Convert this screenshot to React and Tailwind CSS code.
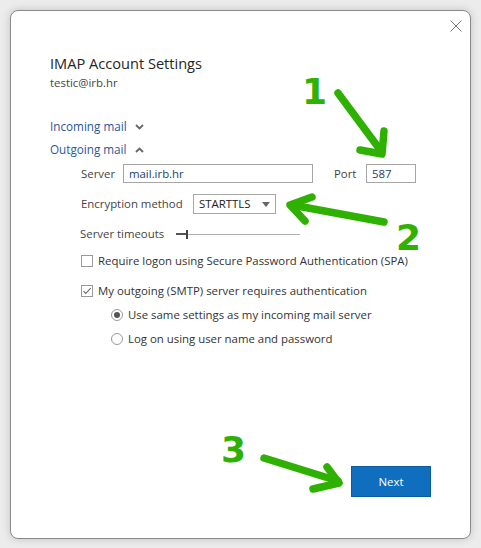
import { useState } from 'react';

const font = { fontFamily: '"Open Sans", "Noto Sans", sans-serif' };

function Chevron({ up }) {
  return (
    <svg className="w-[9px] h-[6px] ml-[8px] mt-[2px]" viewBox="0 0 9 6" fill="none" stroke="#666" strokeWidth="1.8">
      {up ? <path d="M1 5l3.5-3.5L8 5" /> : <path d="M1 1l3.5 3.5L8 1" />}
    </svg>
  );
}

function Checkbox({ checked, label }) {
  return (
    <label className="flex items-center gap-[5px] text-[11.4px] leading-[18px] text-[#333]">
      <span className="w-[12px] h-[12px] border border-[#9a9a9a] bg-white flex items-center justify-center">
        {checked && (
          <svg className="w-[10px] h-[10px]" viewBox="0 0 10 10" fill="none" stroke="#666" strokeWidth="1.1">
            <path d="M1.5 5.2l2.3 2.3L8.7 2.2" />
          </svg>
        )}
      </span>
      <span>{label}</span>
    </label>
  );
}

function Radio({ checked, label }) {
  return (
    <label className="flex items-center gap-[5px] text-[11.4px] leading-[18px] text-[#333]">
      <span className="w-[12px] h-[12px] rounded-full border border-[#9a9a9a] bg-white flex items-center justify-center">
        {checked && <span className="w-[6px] h-[6px] rounded-full bg-[#555]" />}
      </span>
      <span>{label}</span>
    </label>
  );
}

// green hand-drawn style annotation arrows with step numbers
function Annotations() {
  const stroke = { stroke: '#2eb100', strokeWidth: 7.5, strokeLinecap: 'round', strokeLinejoin: 'round', fill: 'none' };
  return (
    <svg className="absolute inset-0 pointer-events-none" width="481" height="548" viewBox="0 0 481 548">
      <path d="M338 93L381 151" {...stroke} />
      <path d="M360 150L382 154L384 131" {...stroke} />
      <path d="M384 222L292 205" {...stroke} />
      <path d="M312 197L290 205L305 221" {...stroke} />
      <path d="M264 458L338 481" {...stroke} />
      <path d="M327 467L339 483L313 489" {...stroke} />
      <text x="302" y="104" fill="#2eb100" fontSize="36" fontWeight="700" fontFamily="DejaVu Sans, sans-serif">1</text>
      <text x="396" y="250" fill="#2eb100" fontSize="36" fontWeight="700" fontFamily="DejaVu Sans, sans-serif">2</text>
      <text x="221" y="462" fill="#2eb100" fontSize="36" fontWeight="700" fontFamily="DejaVu Sans, sans-serif">3</text>
    </svg>
  );
}

export default function App() {
  const [server, setServer] = useState('mail.irb.hr');
  const [port, setPort] = useState('587');

  return (
    <div className="relative w-[481px] h-[548px] bg-[#ececec] pt-[10px] pl-[10px]" style={font}>
      <div className="w-[461px] h-[529px] bg-white border border-[#8a8a8a] rounded-[8px] shadow-[0_0_8px_rgba(0,0,0,0.18)] flex flex-col">
        <div className="flex justify-end pt-[8px] pr-[8px] h-[30px]">
          <svg className="w-[12px] h-[12px] mt-[1px]" viewBox="0 0 12 12" stroke="#777" strokeWidth="1">
            <path d="M0.5 0.5l11 11M11.5 0.5l-11 11" />
          </svg>
        </div>

        <div className="pl-[39px]">
          <h1 className="text-[14.6px] leading-[20px] text-[#262626] mt-[12px]">IMAP Account Settings</h1>
          <p className="text-[11.4px] leading-[16px] text-[#444] mt-[2px]">testic@irb.hr</p>

          <div className="mt-[27px] flex items-center text-[11.7px] leading-[16px] text-[#2b5797]">
            Incoming mail <Chevron />
          </div>
          <div className="mt-[7px] flex items-center text-[11.7px] leading-[16px] text-[#2b5797]">
            Outgoing mail <Chevron up />
          </div>

          <div className="pl-[31px] text-[11.4px] leading-[18px] text-[#444]">
            <div className="mt-[7px] flex items-center h-[19px]">
              <span className="w-[42px]">Server</span>
              <input
                value={server}
                onChange={(e) => setServer(e.target.value)}
                className="w-[190px] h-[19px] border border-[#a6a6a6] px-[5px] text-[11.4px] text-[#1f3d6b] outline-none"
              />
              <span className="ml-[21px] w-[32px]">Port</span>
              <input
                value={port}
                onChange={(e) => setPort(e.target.value)}
                className="w-[50px] h-[19px] border border-[#a6a6a6] px-[5px] text-[11.4px] text-[#1f3d6b] outline-none"
              />
            </div>

            <div className="mt-[11px] flex items-center h-[20px]">
              <span className="w-[112px]">Encryption method</span>
              <div className="w-[83px] h-[20px] border border-[#a6a6a6] flex items-center justify-between px-[5px] text-[#222]">
                <span>STARTTLS</span>
                <svg className="w-[8px] h-[5px]" viewBox="0 0 8 5" fill="#666"><path d="M0 0h8L4 5z" /></svg>
              </div>
            </div>

            <div className="mt-[13px] flex items-center h-[14px]">
              <span className="w-[96px] -ml-[1px]">Server timeouts</span>
              <div className="relative w-[124px] h-[10px] flex items-center">
                <div className="h-[1px] w-full bg-[#b0b0b0]" />
                <div className="absolute left-0 h-[2px] w-[11px] bg-[#555]" />
                <div className="absolute left-[10px] h-[9px] w-[2px] bg-[#444]" />
              </div>
            </div>

            <div className="mt-[11px] flex flex-col gap-[12px]">
              <Checkbox label="Require logon using Secure Password Authentication (SPA)" />
              <Checkbox checked label="My outgoing (SMTP) server requires authentication" />
            </div>

            <div className="pl-[30px] mt-[6px] flex flex-col gap-[6px]">
              <Radio checked label="Use same settings as my incoming mail server" />
              <Radio label="Log on using user name and password" />
            </div>
          </div>
        </div>

        <div className="mt-auto flex justify-end pr-[39px] pb-[41px]">
          <button className="w-[80px] h-[31px] bg-[#106ebe] border border-[#0b5a9e] text-white text-[11.4px]">Next</button>
        </div>
      </div>
      <Annotations />
    </div>
  );
}
